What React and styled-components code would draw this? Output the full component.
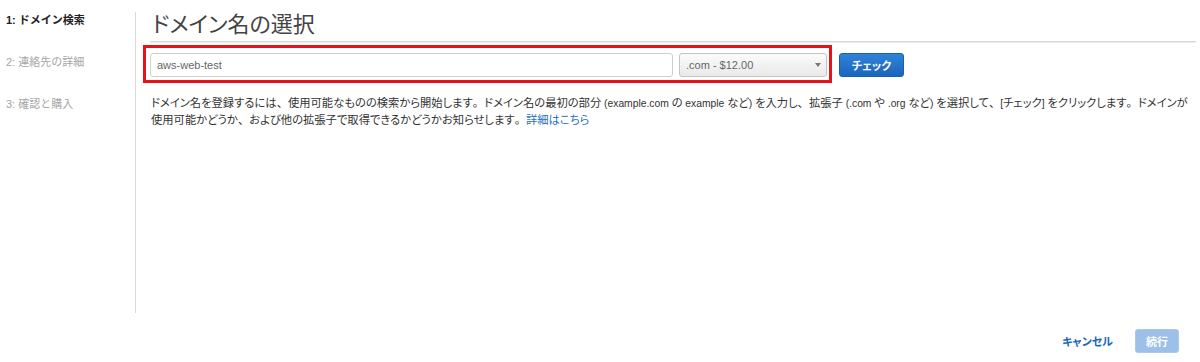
import React from "react";
import styled, { createGlobalStyle } from "styled-components";

const GlobalStyle = createGlobalStyle`
  html, body { margin: 0; padding: 0; background: #fff; }
  body {
    font-family: "Liberation Sans", "Noto Sans CJK JP", sans-serif;
    color: #333;
  }
`;

const Page = styled.div`
  width: 1200px;
  height: 362px;
  box-sizing: border-box;
  padding-top: 12px;
  display: flex;
  flex-direction: column;
`;

const TopRow = styled.div`
  display: flex;
  height: 301px;
`;

const Sidebar = styled.nav`
  width: 136px;
  box-sizing: border-box;
  border-right: 1px solid #d9d9d9;
  padding: 1px 0 0 6px;
  display: flex;
  flex-direction: column;
  gap: 28px;
`;

const Step = styled.div`
  font-size: 11px;
  line-height: 14px;
  font-weight: ${(p) => (p.$active ? 700 : 400)};
  color: ${(p) => (p.$active ? "#222" : "#a6a6a6")};
  white-space: nowrap;
`;

const Main = styled.main`
  flex: 1;
  padding: 0 4px 0 14px;
  display: flex;
  flex-direction: column;
`;

const Title = styled.h1`
  margin: 0;
  font-size: 22px;
  line-height: 26px;
  font-weight: 400;
  color: #444;
  padding: 0 0 3px 2px;
  border-bottom: 1px solid #d6d6d6;
  box-shadow: 0 1px 0 #efefef;
  font-feature-settings: "palt";
`;

const FormRow = styled.div`
  display: flex;
  align-items: flex-start;
  margin-top: 3px;
`;

const Highlight = styled.div`
  display: flex;
  gap: 6px;
  border: 3px solid #e8121b;
  padding: 5px 2px 3px 4px;
  margin-left: -7px;
`;

const TextInput = styled.input`
  box-sizing: border-box;
  width: 523px;
  height: 24px;
  border: 1px solid #cfcfcf;
  border-radius: 3px;
  padding: 0 6px;
  font-family: "Liberation Sans", "Noto Sans CJK JP", sans-serif;
  font-size: 11px;
  color: #666;
  background: #fff;
  outline: none;
`;

const SelectBox = styled.div`
  position: relative;
  box-sizing: border-box;
  width: 148px;
  height: 24px;
  border: 1px solid #c4c4c4;
  border-radius: 3px;
  background: linear-gradient(#fbfbfb, #e9e9e9);
  display: flex;
  align-items: center;
  padding-left: 6px;
  font-size: 11px;
  color: #666;
`;

const Caret = styled.span`
  position: absolute;
  right: 5px;
  top: 9px;
  width: 0;
  height: 0;
  border-left: 3px solid transparent;
  border-right: 3px solid transparent;
  border-top: 4px solid #777;
`;

const PrimaryButton = styled.button`
  box-sizing: border-box;
  height: 24px;
  width: ${(p) => p.$w}px;
  margin: ${(p) => p.$m || "0"};
  border-radius: 3px;
  border: 1px solid ${(p) => (p.$disabled ? "#a9c8ea" : "#1b5fae")};
  background: ${(p) =>
    p.$disabled ? "#9dc0e8" : "linear-gradient(#2e83d6, #1b66bc)"};
  color: #fff;
  font-family: "Liberation Sans", "Noto Sans CJK JP", sans-serif;
  font-feature-settings: "palt";
  font-size: 11px;
  font-weight: 700;
  padding: 0;
  cursor: pointer;
  display: flex;
  align-items: center;
  justify-content: center;
`;

const Description = styled.p`
  margin: 12px -4px 0 1px;
  font-size: 11.3px;
  line-height: 17px;
  color: #333;
  font-feature-settings: "palt";
`;

const Latin = styled.span`
  font-size: 10.3px;
`;

const Punct = styled.span`
  font-feature-settings: normal;
`;

const Link = styled.a`
  color: #1f6fc4;
  text-decoration: none;
`;

const Footer = styled.div`
  display: flex;
  justify-content: flex-end;
  align-items: center;
  gap: 22px;
  padding: 16px 21px 0 0;
`;

const CancelLink = styled.a`
  font-size: 11px;
  font-weight: 700;
  color: #1a66b8;
  text-decoration: none;
  font-feature-settings: "palt";
`;

export default function App() {
  return (
    <>
      <GlobalStyle />
      <Page>
        <TopRow>
          <Sidebar>
            <Step $active>1: ドメイン検索</Step>
            <Step>2: 連絡先の詳細</Step>
            <Step>3: 確認と購入</Step>
          </Sidebar>
          <Main>
            <Title>ドメイン名の選択</Title>
            <FormRow>
              <Highlight>
                <TextInput defaultValue="aws-web-test" />
                <SelectBox>
                  .com - $12.00
                  <Caret />
                </SelectBox>
              </Highlight>
              <PrimaryButton $w={65} $m="8px 0 0 7px">
                チェック
              </PrimaryButton>
            </FormRow>
            <Description>
              ドメイン名を登録するには<Punct>、</Punct>使用可能なものの検索から開始します
              <Punct>。</Punct>ドメイン名の最初の部分
              <Latin> (example.com </Latin>の<Latin> example </Latin>など
              <Latin>) </Latin>を入力し<Punct>、</Punct>拡張子<Latin> (.com </Latin>や
              <Latin> .org </Latin>など<Latin>) </Latin>を選択して<Punct>、</Punct>
              <Latin>[</Latin>チェック<Latin>] </Latin>をクリックします<Punct>。</Punct>ドメインが
              <br />
              使用可能かどうか<Punct>、</Punct>および他の拡張子で取得できるかどうかお知らせします
              <Punct>。</Punct>
              <Link href="#">詳細はこちら</Link>
            </Description>
          </Main>
        </TopRow>
        <Footer>
          <CancelLink href="#">キャンセル</CancelLink>
          <PrimaryButton $w={44} $disabled>
            続行
          </PrimaryButton>
        </Footer>
      </Page>
    </>
  );
}
